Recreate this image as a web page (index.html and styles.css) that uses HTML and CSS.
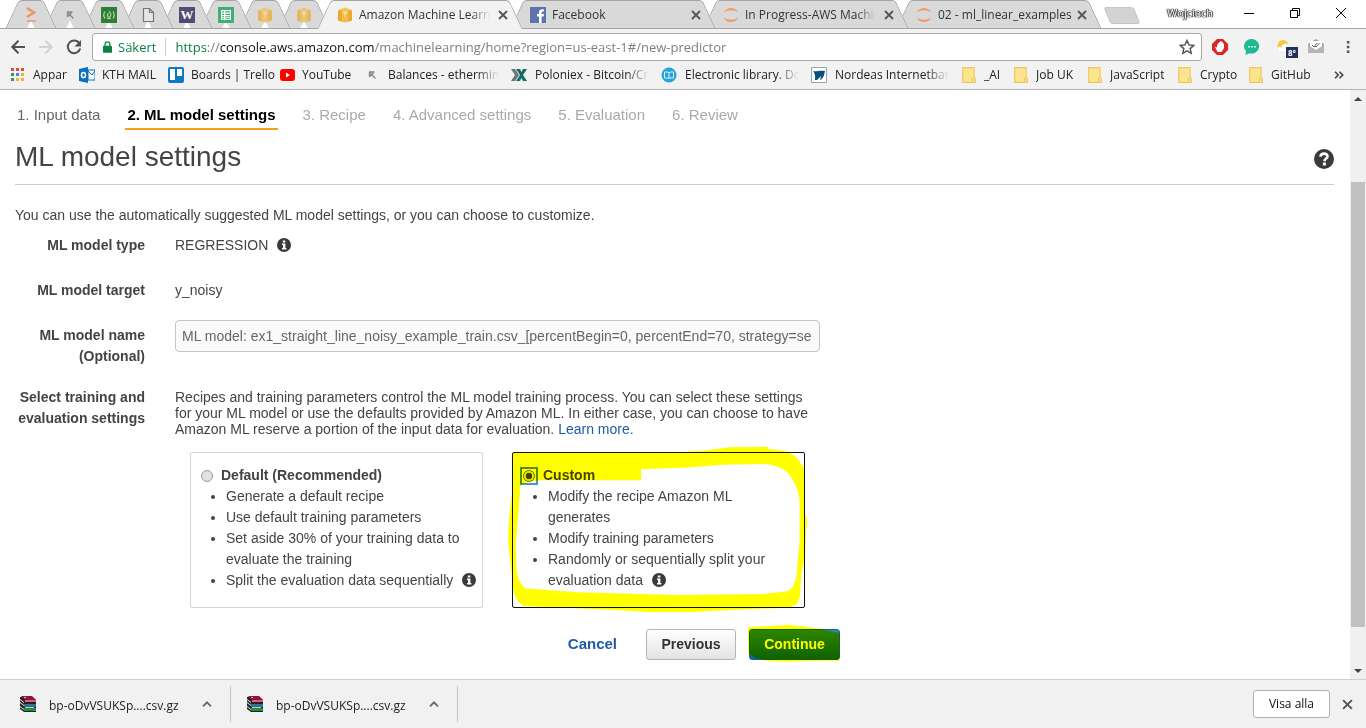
FILE: index.html
```html
<!DOCTYPE html>
<html lang="en">
<head>
<meta charset="utf-8">
<title>Amazon Machine Learning</title>
<link rel="stylesheet" href="styles.css">
</head>
<body>
<svg class="defs" aria-hidden="true">
  <symbol id="info" viewBox="0 0 14 14"><circle cx="7" cy="7" r="7" fill="#3a3a3a"/><path d="M5.800 2.400h2.500v2H5.800zM5 5.600h3.400v4.300h1v1.500H5V9.900h1V7H5z" fill="#fff"/></symbol>
  <symbol id="close" viewBox="0 0 10 10"><path d="M1 1l8 8M9 1l-8 8" fill="none" stroke="currentColor" stroke-width="1.800"/></symbol>
  <symbol id="cube" viewBox="0 0 16 16"><path d="M1 3.500L5.500 2v13L1 13.500zM10.500 2L15 3.500v10L10.500 15z" fill="#edaa26"/><path d="M5.500 5l2.500.5 2.500-.5v10l-2.500.5-2.500-.5z" fill="#f4b93f"/><path d="M2 3l6-2.500L14 3l-3.500 1.500h-5z" fill="#f6c04d"/><path d="M6.200 5.500h3.600V7H8.500v4h-1V7H6.200z" fill="#fce3ab"/></symbol>
  <symbol id="jupyter" viewBox="0 0 16 16"><path d="M1 5.500C3-.5 13-.5 15 5.500 11.500 2.600 4.500 2.600 1 5.500zM1 10.500c2 6 12 6 14 0-3.500 2.900-10.500 2.900-14 0z" fill="#f79a5e"/></symbol>
  <symbol id="pick" viewBox="0 0 16 16"><path d="M5 5h5.500M5.500 5v5M5.500 5.500l6 6M9 5.500c0 2-1 3-3 3.500" fill="none" stroke="#888" stroke-width="1.400"/></symbol>
  <symbol id="folder" viewBox="0 0 12 14"><path d="M.5.500h10v8.500l1 1v3.500H.5z" fill="#fde58f" stroke="#e9c95f"/><path d="M10.500 9L9 10.500v3" fill="none" stroke="#e9c95f"/></symbol>
  <symbol id="books" viewBox="0 0 16 16"><path d="M0 1h12l4 3v12H4l-4-3z" fill="#222"/><path d="M1 0h11l4 4H5z" fill="#8e1440"/><path d="M5 4h11v2H5z" fill="#e0559c"/><path d="M4 8h12v3H4z" fill="#2374a8"/><path d="M4 12h12v3H4z" fill="#1e8a56"/><path d="M0 3l4 3v1L0 4zM0 6l4 3v1L0 7zM0 10l4 3v1l-4-3z" fill="#eee"/><path d="M4 1h2v1H4zM5 11h9v1H5z" fill="#f5c928"/></symbol>
  <symbol id="chevron" viewBox="0 0 10 6"><path d="M1 5.300L5 1.300l4 4" fill="none" stroke="#666" stroke-width="1.800"/></symbol>
</svg>

<header class="browser">
  <div class="tabstrip">
    <div class="tab pinned"><svg class="fav" viewBox="0 0 16 16"><path d="M4 1l7 4.500L4 10" fill="none" stroke="#f0935f" stroke-width="2.500"/><path d="M4 14h9" stroke="#f0935f" stroke-width="1.500"/></svg></div>
    <div class="tab pinned"><svg class="fav"><use href="#pick"/></svg></div>
    <div class="tab pinned"><svg class="fav" viewBox="0 0 16 16"><path d="M0 0h16v16H0z" fill="#2e7d39"/><path d="M4 4.500Q1.500 8 4 11.500M12 4.500q2.500 3.500 0 7M6 11.500h4M8 4.200c2 2 2.200 4 1 5.800H7c-1.500-2 0-2.500 0-4" fill="none" stroke="#b5dba8" stroke-width="1.200"/></svg></div>
    <div class="tab pinned"><svg class="fav" viewBox="0 0 16 16"><path d="M3.500 1.500h6l4 4v9h-10zM9.500 1.500v4h4" fill="#e6e6e6" stroke="#777" stroke-width="1.200"/></svg></div>
    <div class="tab pinned"><span class="fav word">W</span></div>
    <div class="tab pinned"><svg class="fav" viewBox="0 0 16 16"><path d="M0 0h16v16H0z" fill="#3faf78"/><path d="M3 3h10v10H3z" fill="#fff"/><path d="M4 4.200h2v1.300H4zM7.200 4.200H12v1.300H7.200zM4 6.700h2V8H4zM7.200 6.700H12V8H7.200zM4 9.200h2v1H4zM7.200 9.200H12v1H7.200zM4 11.200h2v1H4zM7.200 11.200H12v1H7.200z" fill="#3faf78"/></svg></div>
    <div class="tab pinned faded"><svg class="fav"><use href="#cube"/></svg></div>
    <div class="tab pinned faded"><svg class="fav"><use href="#cube"/></svg></div>
    <div class="tab active"><svg class="fav"><use href="#cube"/></svg><span class="tab-title fade">Amazon Machine Learning</span><button class="tab-close" aria-label="Close tab"><svg><use href="#close"/></svg></button></div>
    <div class="tab"><svg class="fav" viewBox="0 0 16 16"><path d="M0 0h16v16H0z" fill="#5d73ab"/><path d="M9 16V9.500H7V7h2V5.500C9 3 10.500 2 14 2.400v2.200c-2 0-2.400.2-2.400 1.200V7H14l-.4 2.500h-2V16z" fill="#fff"/></svg><span class="tab-title">Facebook</span><button class="tab-close" aria-label="Close tab"><svg><use href="#close"/></svg></button></div>
    <div class="tab"><svg class="fav"><use href="#jupyter"/></svg><span class="tab-title fade">In Progress-AWS Machine</span><button class="tab-close" aria-label="Close tab"><svg><use href="#close"/></svg></button></div>
    <div class="tab"><svg class="fav"><use href="#jupyter"/></svg><span class="tab-title">02 - ml_linear_examples</span><button class="tab-close" aria-label="Close tab"><svg><use href="#close"/></svg></button></div>
    <button class="new-tab" aria-label="New tab"></button>
    <div class="window-controls">
      <span class="profile">Wojciech</span>
      <button aria-label="Minimize"><svg viewBox="0 0 12 12"><path d="M1 6.500h10" stroke="#000"/></svg></button>
      <button aria-label="Restore"><svg viewBox="0 0 12 12"><path d="M1.500 3.500h7v7h-7zM3.500 3.500v-2h7v7h-2" fill="none" stroke="#000"/></svg></button>
      <button aria-label="Close"><svg viewBox="0 0 12 12"><path d="M1 1l10 10M11 1L1 11" stroke="#000"/></svg></button>
    </div>
  </div>

  <div class="toolbar">
    <nav class="nav-buttons">
      <button aria-label="Back"><svg viewBox="0 0 16 16"><path d="M15 8H2.500M8.500 1.800L2.300 8l6.200 6.200" fill="none" stroke="#505050" stroke-width="2"/></svg></button>
      <button aria-label="Forward"><svg viewBox="0 0 16 16"><path d="M1 8h12.500M7.500 1.800L13.700 8l-6.200 6.200" fill="none" stroke="#d2d2d2" stroke-width="2"/></svg></button>
      <button aria-label="Reload"><svg viewBox="0 0 16 16"><path d="M13.500 4.500A6.300 6.300 0 1 0 14.200 9.500" fill="none" stroke="#505050" stroke-width="2"/><path d="M15 1v6.500H8.500z" fill="#505050"/></svg></button>
    </nav>
    <div class="omnibox">
      <svg class="lock" viewBox="0 0 10 13"><path d="M1 5h8q1 0 1 1v6q0 1-1 1H1q-1 0-1-1V6q0-1 1-1z" fill="#0b8043"/><path d="M2.300 6V3.500a2.700 2.700 0 0 1 5.400 0V6" fill="none" stroke="#0b8043" stroke-width="1.400"/></svg>
      <span class="secure">Säkert</span>
      <span class="url"><span class="scheme">https</span>://<span class="host">console.aws.amazon.com</span>/machinelearning/home?region=us-east-1#/new-predictor</span>
      <svg class="star" viewBox="0 0 16 16"><path d="M8 1.500l2 4.400 4.800.5-3.600 3.200 1 4.700L8 11.900l-4.200 2.400 1-4.700L1.200 6.400 6 5.900z" fill="none" stroke="#555" stroke-width="1.500"/></svg>
    </div>
    <div class="extensions">
      <svg viewBox="0 0 16 16"><path d="M5 0h6l5 5v6l-5 5H5l-5-5V5z" fill="#dc2626"/><path d="M5 5.500V9L4 7.500 3 8l2.500 5h4L12 9V4.500h-1.200V3H9.500V2H8.300v1H7v1H6v1.500z" fill="#fff"/></svg>
      <svg viewBox="0 0 16 16"><path d="M8 0a7.300 7.300 0 1 1-2.500 14.200L1.500 16 2 12.200A7.300 7.300 0 0 1 8 0z" fill="#1dba93"/><path d="M4.300 7h1.500v1.500H4.300zM7.300 7h1.500v1.500H7.300zM10.300 7h1.500v1.500h-1.500z" fill="#fff"/></svg>
      <span class="weather"><svg viewBox="0 0 16 16"><circle cx="7" cy="6.500" r="5.500" fill="#f6cc45"/><path d="M3 13c-4-2-1-6.500 2-4.500C7 3 13.500 4 13.500 8c3 1.500 1.500 5-1 5z" fill="#fff" stroke="#ddd" stroke-width=".5"/></svg><b class="badge">8°</b></span>
      <svg viewBox="0 0 16 16"><path d="M0 5l8-5 8 5v9H0z" fill="#a6a6a6"/><path d="M2 2h12v7l-6 3-6-3z" fill="#fff"/><path d="M4 6l2 2 3-4M7 7l1 1 3.500-4" fill="none" stroke="#666"/><path d="M0 6l8 5 8-5v8H0z" fill="#b5b5b5"/></svg>
      <svg viewBox="0 0 16 16"><path d="M6.800 2h2.600v2.600H6.800zM6.800 6.700h2.600v2.600H6.800zM6.800 11.400h2.600V14H6.800z" fill="#555"/></svg>
    </div>
  </div>

  <nav class="bookmarks">
    <a href="#"><svg viewBox="0 0 16 16"><path d="M1 1h3v3H1zM6 1h3v3H6zM11 1h3v3h-3z" fill="#dc4b3e"/><path d="M1 6h3v3H1z" fill="#2c9c50"/><path d="M6 6h3v3H6z" fill="#4382e8"/><path d="M11 6h3v3h-3zM6 11h3v3H6zM11 11h3v3h-3z" fill="#efb52e"/><path d="M1 11h3v3H1z" fill="#2c9c50"/></svg><span>Appar</span></a>
    <a href="#"><svg viewBox="0 0 16 16"><path d="M9 3h7v10H9z" fill="#fff" stroke="#0a6fc2"/><path d="M9 4l4 4 3-4" fill="none" stroke="#0a6fc2"/><path d="M0 2l9-2v16l-9-2z" fill="#0a6fc2"/><ellipse cx="4.500" cy="8" rx="2" ry="2.600" fill="none" stroke="#fff" stroke-width="1.500"/></svg><span>KTH MAIL</span></a>
    <a href="#"><svg viewBox="0 0 16 16"><rect width="16" height="16" rx="2" fill="#0b79bf"/><path d="M2 2h5v11H2zM9 2h5v7H9z" fill="#fff"/></svg><span>Boards | Trello</span></a>
    <a href="#"><svg viewBox="0 0 16 16"><rect x="1" y="2" width="15" height="12" rx="3" fill="#f00"/><path d="M7 5.500l4 2.500-4 2.500z" fill="#fff"/></svg><span>YouTube</span></a>
    <a class="long" href="#"><svg><use href="#pick"/></svg><span>Balances - ethermine</span></a>
    <a class="long" href="#"><svg viewBox="0 0 16 16"><path d="M0 2h4l4 6-4 6H0l4-6z" fill="#68777a"/><path d="M5 2h4l1.500 3L12 2h4l-4 6 4 6h-4l-1.500-3L9 14H5l4-6z" fill="#156b68"/></svg><span>Poloniex - Bitcoin/Crypto</span></a>
    <a class="long" href="#"><svg viewBox="0 0 16 16"><circle cx="8" cy="8" r="7.500" fill="#27a3d7"/><path d="M3.500 5H7l1 1 1-1h3.500v6H9l-1 .5L7 11H3.500zM8 6v5" fill="none" stroke="#d8f2fc"/></svg><span>Electronic library. Download</span></a>
    <a class="long" href="#"><svg viewBox="0 0 16 16"><path d="M.5.500h15v15H.5z" fill="#fff" stroke="#8fa9b8"/><path d="M2 4c4 1 6-1 12 0-1 4-1 7-5 9l1-4-4 4H4c0-3 1-5-2-9z" fill="#07517f"/></svg><span>Nordeas Internetbank</span></a>
    <a href="#"><svg><use href="#folder"/></svg><span>_AI</span></a>
    <a href="#"><svg><use href="#folder"/></svg><span>Job UK</span></a>
    <a href="#"><svg><use href="#folder"/></svg><span>JavaScript</span></a>
    <a href="#"><svg><use href="#folder"/></svg><span>Crypto</span></a>
    <a href="#"><svg><use href="#folder"/></svg><span>GitHub</span></a>
    <button class="more" aria-label="More bookmarks"><svg viewBox="0 0 10 8"><path d="M1 .8L4.200 4 1 7.200M5.500.8L8.700 4 5.500 7.200" fill="none" stroke="#444" stroke-width="1.600"/></svg></button>
  </nav>
</header>

<div class="viewport">
  <main class="page">
    <ol class="steps">
      <li class="done">1. Input data</li>
      <li class="current">2. ML model settings</li>
      <li>3. Recipe</li>
      <li>4. Advanced settings</li>
      <li>5. Evaluation</li>
      <li>6. Review</li>
    </ol>
    <div class="heading">
      <h1>ML model settings</h1>
      <button class="help" aria-label="Help"><svg viewBox="0 0 20 20"><circle cx="10" cy="10" r="10" fill="#3a3a3a"/><path d="M6.500 7.800C6.500 3.500 13.800 3.700 13.500 7.500c0 2-3 2.200-3 4.700" fill="none" stroke="#fff" stroke-width="2.600"/><path d="M8.900 13.500h3v3h-3z" fill="#fff"/></svg></button>
    </div>
    <p class="intro">You can use the automatically suggested ML model settings, or you can choose to customize.</p>

    <form class="form">
      <div class="row"><span class="label">ML model type</span><div class="value">REGRESSION <svg class="info"><use href="#info"/></svg></div></div>
      <div class="row"><span class="label">ML model target</span><div class="value">y_noisy</div></div>
      <div class="row name-row"><label class="label" for="model-name">ML model name (Optional)</label><input class="text-input" id="model-name" type="text" value="ML model: ex1_straight_line_noisy_example_train.csv_[percentBegin=0, percentEnd=70, strategy=sequential]"></div>
      <div class="row"><span class="label">Select training and evaluation settings</span>
        <div class="value">
          <p class="description">Recipes and training parameters control the ML model training process. You can select these settings for your ML model or use the defaults provided by Amazon ML. In either case, you can choose to have Amazon ML reserve a portion of the input data for evaluation. <a href="#">Learn more.</a></p>
          <div class="cards">
            <section class="card">
              <label class="choice"><input type="radio" name="settings"><span>Default (Recommended)</span></label>
              <ul>
                <li>Generate a default recipe</li>
                <li>Use default training parameters</li>
                <li>Set aside 30% of your training data to evaluate the training</li>
                <li>Split the evaluation data sequentially <svg class="info"><use href="#info"/></svg></li>
              </ul>
            </section>
            <section class="card selected">
              <label class="choice"><input type="radio" name="settings" checked><span>Custom</span></label>
              <ul>
                <li>Modify the recipe Amazon ML generates</li>
                <li>Modify training parameters</li>
                <li>Randomly or sequentially split your evaluation data <svg class="info"><use href="#info"/></svg></li>
              </ul>
              <svg class="marker card-marker" viewBox="0 0 1110 600" aria-hidden="true"><path fill-rule="evenodd" d="M68 68H540L640 62 720 52 832 50 836 58Q900 58 925 88L943 118V258Q954 250 949 300L945 380Q932 420 930 500 925 530 890 533L720 540 600 546H470L380 540 235 534 100 528Q75 510 70 480L62 400Q50 330 58 260L66 190ZM92 162L145 151H453V118L600 112 700 104 820 102Q885 106 905 145 928 180 929 220V330L920 430Q915 478 890 484L820 492 550 495 250 486 105 475Q84 460 80 420L77 350 85 250Z"/></svg>
            </section>
          </div>
        </div>
      </div>
      <div class="actions">
        <a class="cancel" href="#">Cancel</a>
        <button class="btn" type="button">Previous</button>
        <button class="btn primary" type="button">Continue<svg class="marker button-marker" viewBox="0 0 282 114" aria-hidden="true"><path d="M3 7L80 2 125 0 185 6 225 13 278 24V107H190L125 110 65 108 25 99 3 84Z"/></svg></button>
      </div>
    </form>
  </main>
  <div class="scrollbar" aria-hidden="true"><i class="arrow up"></i><i class="before"></i><i class="thumb"></i><i class="after"></i><i class="arrow down"></i></div>
</div>

<footer class="downloads">
  <div class="download"><svg class="archive"><use href="#books"/></svg><span>bp-oDvVSUKSp....csv.gz</span><button aria-label="Download options"><svg class="chev"><use href="#chevron"/></svg></button></div>
  <div class="download"><svg class="archive"><use href="#books"/></svg><span>bp-oDvVSUKSp....csv.gz</span><button aria-label="Download options"><svg class="chev"><use href="#chevron"/></svg></button></div>
  <button class="show-all">Visa alla</button>
  <button class="dismiss" aria-label="Close downloads bar"><svg><use href="#close"/></svg></button>
</footer>
</body>
</html>
```
FILE: styles.css
```css
* { box-sizing: border-box; }
body { margin: 0; height: 100vh; display: flex; flex-direction: column; overflow: hidden; background: #fff; color: #444; font: 14px/21px "Liberation Sans", Arial, sans-serif; }
button { font: inherit; color: inherit; border: 0; padding: 0; background: none; }
.defs { position: absolute; width: 0; height: 0; }
svg { display: block; flex: none; }
a { text-decoration: none; }

.browser { font: 12px/16px "Open Sans", "Noto Sans", sans-serif; color: #333; background: #f2f2f2; border-bottom: 1px solid #b5b5b5; }
.tabstrip { display: flex; height: 29px; padding-left: 5px; background: #fff; border-bottom: 1px solid #a3a3a3; }
.tab { position: relative; display: flex; align-items: center; flex: 0 1 206px; min-width: 0; margin-right: -13px; padding: 1px 16px 0 18px; isolation: isolate; --fill: #d9d9d9; }
.tab::before, .tab::after { content: ""; position: absolute; z-index: -1; top: 0; bottom: 0; background: var(--fill); border-top: 1px solid #a3a3a3; }
.tab::before { left: 7px; right: 45%; border-left: 1px solid #a3a3a3; border-top-left-radius: 4px; transform: skewX(-25deg); }
.tab::after { right: 7px; left: 45%; border-right: 1px solid #a3a3a3; border-top-right-radius: 4px; transform: skewX(25deg); }
.tab.pinned { flex: none; width: 52px; }
.tab.pinned:nth-child(1) { z-index: 12; }
.tab.pinned:nth-child(2) { z-index: 11; }
.tab.pinned:nth-child(3) { z-index: 10; }
.tab.pinned:nth-child(4) { z-index: 9; }
.tab.pinned:nth-child(5) { z-index: 8; }
.tab.pinned:nth-child(6) { z-index: 7; }
.tab.pinned:nth-child(7) { z-index: 6; }
.tab.pinned:nth-child(8) { z-index: 5; }
.tab.active { z-index: 20; --fill: #f2f2f2; margin-bottom: -1px; padding-bottom: 1px; }
.tab:nth-child(9), .tab:nth-child(10), .tab:nth-child(11), .tab:nth-child(12) { padding: 1px 15px 0 20px; }
.tab:nth-child(10) { z-index: 4; }
.tab:nth-child(11) { z-index: 3; }
.tab:nth-child(12) { z-index: 2; }
.fav { width: 16px; height: 16px; flex: none; }
.faded .fav { opacity: .7; }
.word { background: #554a72; color: #fff; font: bold 13px/16px "Liberation Serif", serif; text-align: center; }
.tab-title { flex: 1; margin: 0 2px 0 6px; overflow: hidden; white-space: nowrap; }
.fade { margin-right: 8px; mask-image: linear-gradient(90deg, #000 85%, transparent); }
.tab-close svg { width: 10px; height: 10px; color: #555; }
.new-tab { width: 30px; height: 17px; margin: 7px 0 0 18px; background: #d3d3d3; border: 1px solid #c4c4c4; border-radius: 3px; transform: skewX(22deg); }
.window-controls { display: flex; align-items: center; gap: 34px; margin-left: auto; padding: 0 19px 2px 0; }
.window-controls svg { width: 12px; height: 12px; }
.profile { margin-right: -4px; font-size: 11px; color: #fff; text-shadow: 0 0 1px #333, 0 0 1px #333, 0 0 1px #333, 1px 0 1px #444, -1px 0 1px #444; }

.toolbar { display: flex; align-items: center; gap: 10px; height: 33px; padding: 4px 10px 1px 10px; }
.nav-buttons { display: flex; gap: 12px; }
.nav-buttons svg { width: 16px; height: 16px; }
.omnibox { flex: 1; display: flex; align-items: center; height: 28px; padding: 0 6px 0 10px; background: #fff; border: 1px solid #a9a9a9; border-radius: 3px; font-size: 13px; line-height: 20px; white-space: nowrap; }
.lock { width: 9px; height: 12px; margin-right: 6px; }
.secure { color: #0b8043; padding-right: 9px; border-right: 1px solid #ccc; line-height: 18px; }
.url { flex: 1; min-width: 0; overflow: hidden; padding-left: 9px; color: #808080; }
.scheme { color: #0b8043; }
.host { color: #111; }
.star { width: 16px; height: 16px; }
.extensions { display: flex; gap: 16px; }
.extensions svg { width: 16px; height: 16px; }
.weather { position: relative; }
.badge { position: absolute; left: 10px; top: 8px; padding: 0 2px; background: #23305c; color: #fff; font-size: 8px; line-height: 11px; }

.bookmarks { display: grid; grid-template-columns: 69px 89px 111px 85px 147px 150px 150px 150px 52px 74px 90px 71px 1fr auto; align-items: center; height: 27px; padding: 0 22px 2px 10px; color: #222; }
.bookmarks a { display: flex; align-items: center; gap: 7px; min-width: 0; padding-right: 2px; color: inherit; white-space: nowrap; }
.bookmarks a svg { width: 16px; height: 16px; }
.bookmarks a span { overflow: hidden; }
.bookmarks .long { gap: 8px; padding-right: 12px; }
.bookmarks .long span { mask-image: linear-gradient(90deg, #000 80%, transparent); }
.more svg { width: 10px; height: 8px; }

.viewport { flex: 1; min-height: 0; display: flex; }
.page { flex: 1; min-width: 0; overflow: hidden; padding: 12px 16px 0 15px; }
.steps { display: flex; gap: 23px; margin: 0; padding: 0; list-style: none; font-size: 15px; line-height: 26px; color: #aaa; }
.steps li { padding: 0 2px; border-bottom: 2px solid transparent; }
.steps .done { color: #666; }
.steps .current { color: #000; font-weight: bold; border-color: #f0a41c; }
.heading { display: flex; align-items: center; justify-content: space-between; height: 55px; border-bottom: 1px solid #ccc; }
h1 { margin: 0; font-size: 28px; line-height: 32px; font-weight: normal; }
.help svg { width: 20px; height: 20px; }
.help { margin-top: 4px; }
.intro { margin: 20px 0 9px; }
.form { width: 825px; max-width: 100%; }
.row { display: grid; grid-template-columns: 130px minmax(0, 645px); gap: 30px; margin-bottom: 24px; }
.name-row { margin-bottom: 20px; }
.label { font-weight: bold; text-align: right; }
.text-input { height: 32px; margin-top: -5px; padding: 0 8px 0 6px; border: 1px solid #c4c4c4; border-radius: 4px; background: #fafafa; color: #666; font: inherit; }
.info { display: inline-block; width: 14px; height: 14px; margin-left: 5px; vertical-align: -2px; }
.description { margin: 2px 0 15px; line-height: 16px; }
.description a, .cancel { color: #1c5ba5; }
.cards { display: grid; grid-template-columns: 1fr 1fr; gap: 29px; padding: 0 15px; }
.card { position: relative; padding: 12px 8px 16px 10px; border: 1px solid #d5d5d5; border-radius: 2px; }
.card.selected { border-color: #111; }
.choice { display: flex; align-items: center; gap: 8px; font-weight: bold; }
.choice input { appearance: none; flex: none; width: 12px; height: 12px; margin: 0; border: 1px solid #999; border-radius: 50%; background: #e2e2e2; }
.choice input:checked { width: 18px; height: 18px; margin: -3px; border: 2px solid #4e94ce; border-radius: 0; background: radial-gradient(circle, #444 0 3px, #ddd 3px 5px, #888 5px 6px, #fff 6px); }
.card ul { margin: 0 -6px 0 0; padding-left: 25px; }
.selected ul { margin-right: 20px; }
.marker { position: absolute; z-index: 2; fill: #ff0; mix-blend-mode: multiply; pointer-events: none; }
.card-marker { left: -23px; top: -23px; width: 370px; height: 200px; }
.actions { display: flex; align-items: center; justify-content: flex-end; gap: 13px; margin-top: -3px; font-weight: bold; }
.cancel { margin-right: 16px; padding-bottom: 3px; font-size: 15px; }
.btn { position: relative; width: 90px; height: 31px; border: 1px solid #b5b5b5; border-radius: 3px; background: linear-gradient(#fff, #e3e3e3); color: #333; }
.btn.primary { width: 91px; border-color: #1760a8; background: linear-gradient(#2d85c8, #0f62a5); color: #fff; }
.button-marker { left: -3px; top: -5px; width: 94px; height: 38px; }

.scrollbar { width: 16px; display: flex; flex-direction: column; align-items: center; background: #f0f0f0; }
.arrow { width: 16px; height: 17px; display: grid; place-items: center; }
.arrow::before { content: ""; border: 4px solid transparent; }
.up::before { border-top: 0; border-bottom-color: #444; }
.down::before { border-bottom: 0; border-top-color: #444; }
.before { flex: 75; }
.thumb { flex: 445; width: 14px; background: #c1c1c1; }
.after { flex: 35; }

.downloads { display: flex; align-items: center; height: 49px; padding-right: 13px; background: #f1f1f1; border-top: 1px solid #cfcfcf; color: #222; font: 12px/18px "Open Sans", "Noto Sans", sans-serif; }
.download { display: flex; align-items: center; width: 231px; height: 36px; padding: 0 18px 0 20px; border-right: 1px solid #c4c4c4; }
.download + .download { width: 227px; padding-left: 16px; }
.download span { flex: 1; padding: 4px 0 0 13px; }
.archive { width: 16px; height: 16px; }
.chev { width: 10px; height: 6px; }
.show-all { width: 77px; height: 28px; margin-left: auto; background: #fff; border: 1px solid #b0b0b0; border-radius: 3px; color: #111; }
.dismiss svg { width: 11px; height: 11px; margin-left: 12px; color: #555; }
```
